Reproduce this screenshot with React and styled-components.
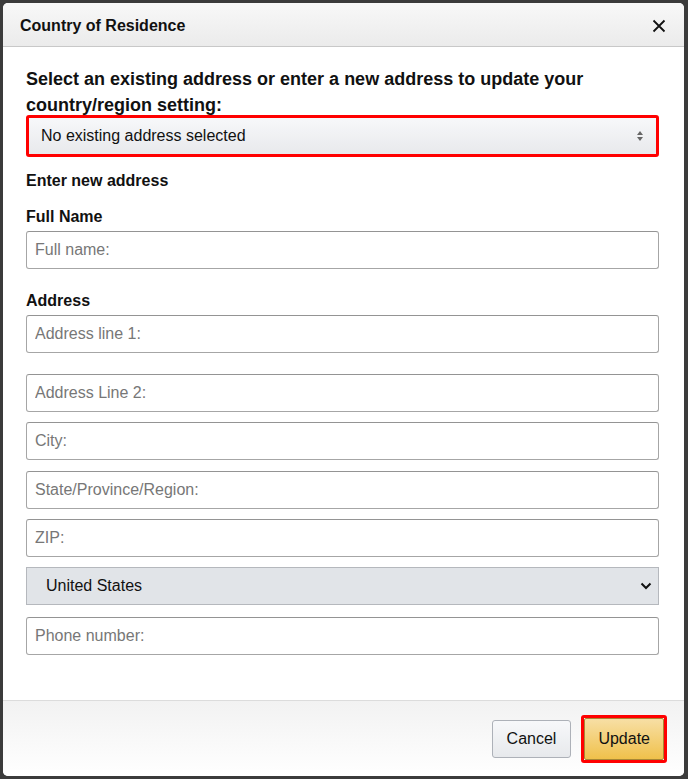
import React from "react"
import styled, { createGlobalStyle } from "styled-components"

const GlobalStyle = createGlobalStyle`
  html, body {
    margin: 0;
    padding: 0;
    background: #3b3b3b;
    font-family: "Liberation Sans", Arial, sans-serif;
  }
`

const fields = [
  { placeholder: "Address line 1:", gap: 0 },
  { placeholder: "Address Line 2:", gap: 21 },
  { placeholder: "City:", gap: 10 },
  { placeholder: "State/Province/Region:", gap: 11 },
  { placeholder: "ZIP:", gap: 10 },
]

export default function App() {
  return (
    <Page>
      <GlobalStyle />
      <Modal>
        <Header>
          <Title>Country of Residence</Title>
          <Close aria-label="Close">
            <svg width="14" height="14" viewBox="0 0 14 14">
              <path d="M1.5 1.5 L12.5 12.5 M12.5 1.5 L1.5 12.5" stroke="#111" strokeWidth="1.8" />
            </svg>
          </Close>
        </Header>
        <Body>
          <Intro>
            Select an existing address or enter a new address to update your
            country/region setting:
          </Intro>
          <Highlight $top={-3}>
            <AddressSelect>
              <span>No existing address selected</span>
              <svg width="8" height="12" viewBox="0 0 8 12">
                <path d="M4 1 L7 5 H1 Z M4 11 L7 7 H1 Z" fill="#666" />
              </svg>
            </AddressSelect>
          </Highlight>
          <SectionTitle>Enter new address</SectionTitle>
          <Label>Full Name</Label>
          <Input placeholder="Full name:" />
          <Label $top={22}>Address</Label>
          {fields.map((f) => (
            <Input key={f.placeholder} placeholder={f.placeholder} $top={f.gap} />
          ))}
          <CountrySelect>
            <span>United States</span>
            <svg width="12" height="8" viewBox="0 0 12 8">
              <path d="M1.5 1.5 L6 6 L10.5 1.5" stroke="#111" strokeWidth="2" fill="none" />
            </svg>
          </CountrySelect>
          <Input placeholder="Phone number:" $top={12} />
        </Body>
        <Footer>
          <CancelButton>Cancel</CancelButton>
          <Highlight>
            <UpdateButton>Update</UpdateButton>
          </Highlight>
        </Footer>
      </Modal>
    </Page>
  )
}

const Page = styled.div`
  padding: 3px 4px 3px 3px;
  height: 779px;
  box-sizing: border-box;
`

const Modal = styled.div`
  background: #fff;
  border-radius: 5px;
  height: 773px;
  display: flex;
  flex-direction: column;
  overflow: hidden;
`

const Header = styled.div`
  height: 44px;
  box-sizing: border-box;
  display: flex;
  align-items: center;
  justify-content: space-between;
  padding: 3px 18px 0 17px;
  background: linear-gradient(#f8f8f8, #ebebeb);
  border-bottom: 1px solid #c8c8c8;
`

const Title = styled.h2`
  margin: 0;
  font-size: 16px;
  font-weight: 700;
  color: #111;
`

const Close = styled.button`
  border: 0;
  background: none;
  padding: 0;
  display: flex;
  cursor: pointer;
`

const Body = styled.div`
  flex: 1;
  padding: 19px 25px 0 23px;
  display: flex;
  flex-direction: column;
`

const Intro = styled.p`
  margin: 0;
  font-size: 18px;
  font-weight: 700;
  line-height: 26px;
  color: #111;
`

const Highlight = styled.div`
  margin-top: ${(p) => p.$top || 0}px;
  border: 3px solid #f00;
  border-radius: 3px;
  display: flex;
`

const AddressSelect = styled.div`
  flex: 1;
  height: 36px;
  display: flex;
  align-items: center;
  justify-content: space-between;
  padding: 0 12px 0 12px;
  background: linear-gradient(#f7f8fa, #e8e9ec);
  font-size: 16px;
  color: #111;
`

const SectionTitle = styled.h3`
  margin: 14px 0 0;
  font-size: 16px;
  font-weight: 700;
  line-height: 20px;
  color: #111;
`

const Label = styled.label`
  margin-top: ${(p) => p.$top || 16}px;
  font-size: 16px;
  font-weight: 700;
  line-height: 20px;
  color: #111;
  margin-bottom: 4px;
`

const Input = styled.input`
  margin-top: ${(p) => p.$top || 0}px;
  height: 38px;
  box-sizing: border-box;
  border: 1px solid #a6a6a6;
  border-top-color: #949494;
  border-radius: 3px;
  padding: 0 8px;
  font-family: "Liberation Sans", Arial, sans-serif;
  font-size: 16px;
  color: #111;
  &::placeholder {
    color: #777;
  }
`

const CountrySelect = styled.div`
  margin-top: 10px;
  height: 38px;
  box-sizing: border-box;
  border: 1px solid #b5b8bd;
  background: #e1e4e8;
  display: flex;
  align-items: center;
  justify-content: space-between;
  padding: 0 6px 0 19px;
  font-size: 16px;
  color: #111;
`

const Footer = styled.div`
  height: 76px;
  box-sizing: border-box;
  border-top: 1px solid #dcdcdc;
  background: linear-gradient(#f2f2f2, #fff);
  display: flex;
  align-items: center;
  justify-content: flex-end;
  gap: 10px;
  padding: 0 17px 0 0;
`

const CancelButton = styled.button`
  height: 38px;
  padding: 0 14px;
  border: 1px solid #adb1b8;
  border-radius: 3px;
  background: linear-gradient(#f7f8fa, #e7e9ec);
  font-family: "Liberation Sans", Arial, sans-serif;
  font-size: 16px;
  color: #111;
`

const UpdateButton = styled.button`
  height: 42px;
  padding: 0 13px;
  border: 1px solid #a88734;
  border-radius: 2px;
  background: linear-gradient(#f7dfa5, #f0c14b);
  font-family: "Liberation Sans", Arial, sans-serif;
  font-size: 16px;
  color: #111;
`
